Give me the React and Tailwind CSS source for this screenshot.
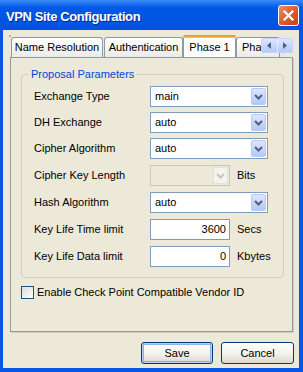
import React from 'react';

const Chevron = ({ disabled }) => (
  <svg width="9" height="6" viewBox="0 0 9 6">
    <polyline points="1,1 4.5,4.5 8,1" fill="none" stroke={disabled ? '#C9C7BA' : '#4D6185'} strokeWidth="2" />
  </svg>
);

const Combo = ({ value, disabled, narrow }) => (
  <div
    className={`flex h-[21px] items-stretch border p-px ${narrow ? 'w-[80px]' : 'w-[118px]'} ${
      disabled ? 'border-[#C9C7BA] bg-[#ECE9D8]' : 'border-[#7F9DB9] bg-white'
    }`}
  >
    <span className="flex-1 pl-[3px] leading-[17px]">{value}</span>
    <span
      className={`flex w-[15px] items-center justify-center rounded-[2px] border ${
        disabled
          ? 'border-[#E3E1D6] bg-[#F4F3EE]'
          : 'border-[#B9CAF3] bg-linear-to-b from-[#DDE6FD] to-[#B4C8F6]'
      }`}
    >
      <Chevron disabled={disabled} />
    </span>
  </div>
);

const Field = ({ value }) => (
  <div className="h-[21px] w-[80px] border border-[#7F9DB9] bg-white pr-[3px] text-right leading-[19px]">{value}</div>
);

const Row = ({ label, children, unit, className = '' }) => (
  <div className={`flex h-[21px] items-center ${className}`}>
    <span className="w-[116px]">{label}</span>
    {children}
    {unit && <span className="ml-[7px]">{unit}</span>}
  </div>
);

const Tab = ({ children, className = '' }) => (
  <div
    className={`flex h-[20px] shrink-0 items-center justify-center whitespace-nowrap rounded-t-[3px] border border-b-0 border-[#919B9C] bg-linear-to-b from-white to-[#ECEBE6] ${className}`}
  >
    {children}
  </div>
);

export default function App() {
  return (
    <div className="flex h-[372px] w-[303px] flex-col overflow-hidden bg-[#0756E6] font-['Liberation_Sans',Arial,sans-serif] text-[11px] leading-[13px] text-black">
      {/* Title bar */}
      <div className="flex h-[30px] shrink-0 items-center bg-linear-to-b from-[#3A8CF7] via-[#0058E8] via-25% to-[#0052DE] pl-[6px] pr-[4px]">
        <span className="flex-1 pt-[2px] text-[13px] font-bold tracking-[-0.4px] text-white [text-shadow:1px_1px_0_#0A2A8C]">
          VPN Site Configuration
        </span>
        <div className="flex h-[21px] w-[21px] items-center justify-center rounded-[3px] border border-white bg-linear-to-br from-[#F08A62] via-[#E25A2C] to-[#C8401A]">
          <svg width="11" height="11" viewBox="0 0 11 11">
            <path d="M1.5 1.5 L9.5 9.5 M9.5 1.5 L1.5 9.5" stroke="white" strokeWidth="2.2" strokeLinecap="square" />
          </svg>
        </div>
      </div>

      {/* Body */}
      <div className="mb-[4px] ml-[3px] mr-[4px] flex flex-1 flex-col bg-[#ECE9D8]">
        {/* Tabs */}
        <div className="relative mt-[5px] flex h-[22px] w-[290px] items-end overflow-hidden pl-[8px]">
          <div className="absolute left-[6px] top-[0px] h-[2px] w-[2px] bg-[#F3A93A]" />
          <Tab className="w-[92px]">Name Resolution</Tab>
          <Tab className="ml-px w-[79px]">Authentication</Tab>
          <div className="relative z-10 -mb-px flex h-[23px] w-[53px] shrink-0 flex-col rounded-t-[3px] border border-b-0 border-[#919B9C] bg-white">
            <div className="-mx-px -mt-px h-[3px] rounded-t-[3px] bg-linear-to-b from-[#E68B2C] to-[#FFC83C]" />
            <span className="flex flex-1 items-center justify-center pb-[2px]">Phase 1</span>
          </div>
          <Tab className="w-[44px] justify-start pl-[5px]">Phase 2</Tab>
          <div className="absolute left-[258px] top-[3px] z-20 flex h-[15px] w-[32px] rounded-[2px] border border-[#C3D3FD] bg-linear-to-b from-[#DCE6FE] to-[#B6CAF7]">
            <div className="flex flex-1 items-center justify-center border-r border-[#E8EEFD]">
              <svg width="4" height="7" viewBox="0 0 4 7"><path d="M4 0 L0 3.5 L4 7 Z" fill="#4D6185" /></svg>
            </div>
            <div className="flex flex-1 items-center justify-center">
              <svg width="4" height="7" viewBox="0 0 4 7"><path d="M0 0 L4 3.5 L0 7 Z" fill="#4D6185" /></svg>
            </div>
          </div>
        </div>

        {/* Panel */}
        <div className="ml-[7px] h-[275px] w-[283px] border border-[#919B9C] bg-[#ECE9D8] shadow-[1px_1px_0_#D0CDBE]">
          <fieldset className="ml-[10px] mt-[10px] w-[260px] rounded-[4px] border border-[#D0D0BF] px-[12px] pb-[10px] pt-[5px]">
            <legend className="-ml-[5px] px-[2px] text-[#0046D5]">Proposal Parameters</legend>
            <Row label="Exchange Type"><Combo value="main" /></Row>
            <Row label="DH Exchange" className="mt-[5px]"><Combo value="auto" /></Row>
            <Row label="Cipher Algorithm" className="mt-[5px]"><Combo value="auto" /></Row>
            <Row label="Cipher Key Length" unit="Bits" className="mt-[6px]"><Combo value="" disabled narrow /></Row>
            <Row label="Hash Algorithm" className="mt-[6px]"><Combo value="auto" /></Row>
            <Row label="Key Life Time limit" unit="Secs" className="mt-[6px]"><Field value="3600" /></Row>
            <Row label="Key Life Data limit" unit="Kbytes" className="mt-[6px]"><Field value="0" /></Row>
          </fieldset>

          <label className="ml-[10px] mt-[8px] flex items-center">
            <span className="h-[13px] w-[13px] border border-[#1C5180] bg-linear-to-br from-[#DCDCD7] to-white" />
            <span className="ml-[3px]">Enable Check Point Compatible Vendor ID</span>
          </label>
        </div>

        {/* Buttons */}
        <div className="mt-[10px] flex justify-end gap-[8px] pr-[5px]">
          <button className="h-[22px] w-[72px] rounded-[3px] border border-[#003C74] bg-linear-to-b from-white via-[#F4F3EE] to-[#DCD8CC] shadow-[inset_0_0_0_1px_#B7CDF5,inset_0_0_0_2px_#8FB0EA]">
            Save
          </button>
          <button className="h-[22px] w-[73px] rounded-[3px] border border-[#003C74] bg-linear-to-b from-white via-[#F4F3EE] to-[#DCD8CC]">
            Cancel
          </button>
        </div>
      </div>
    </div>
  );
}
